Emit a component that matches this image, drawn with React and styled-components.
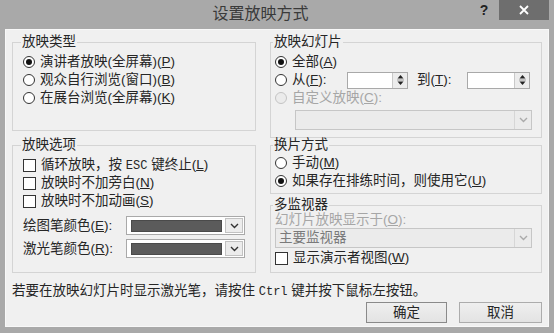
import React from "react";
import styled, { createGlobalStyle } from "styled-components";

const GlobalStyle = createGlobalStyle`
  html, body {
    margin: 0;
    padding: 0;
    background: #a9a9a9;
  }
  body {
    font-family: "Liberation Sans", "Noto Sans CJK SC", sans-serif;
    font-size: 13.5px;
    line-height: 18px;
    color: #262626;
  }
  * {
    box-sizing: border-box;
  }
`;

const Window = styled.div`
  width: 554px;
  height: 333px;
  background: #a9a9a9;
  display: flex;
  flex-direction: column;
`;

const TitleBar = styled.div`
  height: 29px;
  flex: none;
  display: flex;
  align-items: flex-start;
`;

const Title = styled.div`
  flex: 1;
  padding-left: 52px;
  text-align: center;
  font-size: 16px;
  line-height: 28px;
  color: #3a3a3a;
`;

const HelpButton = styled.div`
  width: 30px;
  height: 20px;
  text-align: center;
  font: bold 14px/20px "Liberation Sans", sans-serif;
  color: #222;
`;

const CloseButton = styled.div`
  width: 50px;
  height: 20px;
  margin-right: 5px;
  background: #6e6e6e;
  display: flex;
  align-items: center;
  justify-content: center;
`;

const Client = styled.div`
  flex: 1;
  margin: 0 5px 6px 5px;
  background: #f0f0f0;
  border: 1px solid #f8f8f8;
  padding: 5px 6px 0 6px;
  display: flex;
  flex-direction: column;
`;

const Columns = styled.div`
  display: grid;
  grid-template-columns: 244px 1fr;
  column-gap: 14px;
  height: 238px;
`;

const Column = styled.div`
  display: flex;
  flex-direction: column;
`;

const Group = styled.fieldset`
  margin: ${(p) => p.$mt || 0}px 0 0 0;
  padding: ${(p) => p.$pt ?? 4}px 8px 0 ${(p) => p.$pl || 10}px;
  border: 1px solid #d4d4d4;
  height: ${(p) => p.$h}px;
  min-width: 0;
  display: flex;
  flex-direction: column;
`;

const Legend = styled.legend`
  padding: 0 1px;
  margin-left: -2px;
  line-height: 14px;
`;

const Row = styled.div`
  display: flex;
  align-items: center;
  height: ${(p) => p.$h || 18}px;
  gap: ${(p) => p.$gap ?? 5}px;
  white-space: nowrap;
  color: ${(p) => (p.$disabled ? "#a6a6a6" : "inherit")};
  margin-top: ${(p) => p.$mt || 0}px;
`;

const Radio = styled.span`
  flex: none;
  width: 12px;
  height: 12px;
  border-radius: 50%;
  border: 1px solid ${(p) => (p.$disabled ? "#c4c4c4" : "#333")};
  background: ${(p) => (p.$disabled ? "#ebebeb" : "#fff")};
  display: flex;
  align-items: center;
  justify-content: center;

  &::after {
    content: "";
    display: ${(p) => (p.$checked ? "block" : "none")};
    width: 6px;
    height: 6px;
    border-radius: 50%;
    background: #111;
  }
`;

const Check = styled.span`
  flex: none;
  width: 13px;
  height: 13px;
  border: 1px solid #333;
  background: #fff;
`;

const Mono = styled.span`
  font-family: "Liberation Mono", monospace;
  font-size: 12px;
`;

const Label = styled.span`
  flex: none;
  width: ${(p) => p.$w}px;
  margin-left: ${(p) => p.$ml || 0}px;
`;

const Spin = styled.div`
  flex: none;
  width: ${(p) => p.$w}px;
  height: 17px;
  border: 1px solid #a9a9a9;
  background: #fff;
  display: flex;
  justify-content: flex-end;
`;

const SpinButtons = styled.div`
  width: 15px;
  border-left: 1px solid #c9c9c9;
  background: #ececec;
  display: flex;
  align-items: center;
  justify-content: center;
`;

const Select = styled.div`
  width: ${(p) => p.$w}px;
  height: 20px;
  margin-left: ${(p) => p.$ml || 0}px;
  margin-top: ${(p) => p.$mt || 0}px;
  border: 1px solid #c6c6c6;
  background: #ebebeb;
  display: flex;
  color: #7a7a7a;
  line-height: 18px;
`;

const SelectText = styled.div`
  flex: 1;
  padding-left: 3px;
`;

const SelectArrow = styled.div`
  width: 17px;
  border-left: 1px solid #d6d6d6;
  display: flex;
  align-items: center;
  justify-content: center;
`;

const ColorSelect = styled.div`
  flex: none;
  width: 119px;
  height: 19px;
  border: 1px solid #a9a9a9;
  background: #fff;
  display: flex;
  padding: 3px 1px 2px 4px;
  gap: 3px;
`;

const Swatch = styled.div`
  flex: 1;
  background: #5b5b5b;
  border: 1px solid #4a4a4a;
`;

const ColorArrow = styled.div`
  width: 18px;
  margin: -2px 0 -1px;
  border: 1px solid #c2c2c2;
  background: #ececec;
  display: flex;
  align-items: center;
  justify-content: center;
`;

const Footer = styled.div`
  margin-top: 10px;
  line-height: 16px;
  white-space: nowrap;
`;

const Buttons = styled.div`
  display: flex;
  justify-content: flex-end;
  gap: 12px;
  margin-top: 2px;
`;

const Button = styled.div`
  width: ${(p) => p.$w}px;
  height: 21px;
  border: 1px solid ${(p) => (p.$default ? "#8a8a8a" : "#acacac")};
  background: linear-gradient(#efefef, #e3e3e3);
  text-align: center;
  line-height: 19px;
`;

const Chevron = ({ color = "#333" }) => (
  <svg width="9" height="6" viewBox="0 0 9 6">
    <path d="M1 1l3.5 3.5L8 1" fill="none" stroke={color} strokeWidth="1.4" />
  </svg>
);

const SpinArrows = () => (
  <svg width="7" height="12" viewBox="0 0 7 12">
    <path d="M3.5 1L6.5 4.5H0.5z" fill="#222" />
    <path d="M0 6h7" stroke="#999" strokeWidth="1" />
    <path d="M0.5 7.5h6L3.5 11z" fill="#222" />
  </svg>
);

const CloseIcon = () => (
  <svg width="10" height="10" viewBox="0 0 10 10">
    <path d="M1 1l8 8M9 1l-8 8" stroke="#fff" strokeWidth="1.8" />
  </svg>
);

const ColorRow = ({ label, hotkey, mt }) => (
  <Row $h={19} $mt={mt} $gap={0}>
    <Label $w={103}>
      {label}(<u>{hotkey}</u>):
    </Label>
    <ColorSelect>
      <Swatch />
      <ColorArrow>
        <Chevron />
      </ColorArrow>
    </ColorSelect>
  </Row>
);

const App = () => (
  <>
    <GlobalStyle />
    <Window>
      <TitleBar>
        <Title>设置放映方式</Title>
        <HelpButton>?</HelpButton>
        <CloseButton>
          <CloseIcon />
        </CloseButton>
      </TitleBar>
      <Client>
        <Columns>
          <Column>
            <Group $h={96}>
              <Legend>放映类型</Legend>
              <Row>
                <Radio $checked />
                <span>
                  演讲者放映(全屏幕)(<u>P</u>)
                </span>
              </Row>
              <Row>
                <Radio />
                <span>
                  观众自行浏览(窗口)(<u>B</u>)
                </span>
              </Row>
              <Row>
                <Radio />
                <span>
                  在展台浏览(全屏幕)(<u>K</u>)
                </span>
              </Row>
            </Group>
            <Group $h={135} $mt={7}>
              <Legend>放映选项</Legend>
              <Row>
                <Check />
                <span>
                  循环放映，按 <Mono>ESC</Mono> 键终止(<u>L</u>)
                </span>
              </Row>
              <Row>
                <Check />
                <span>
                  放映时不加旁白(<u>N</u>)
                </span>
              </Row>
              <Row>
                <Check />
                <span>
                  放映时不加动画(<u>S</u>)
                </span>
              </Row>
              <ColorRow label="绘图笔颜色" hotkey="E" mt={6} />
              <ColorRow label="激光笔颜色" hotkey="R" mt={4} />
            </Group>
          </Column>
          <Column>
            <Group $h={103} $pl={4}>
              <Legend>放映幻灯片</Legend>
              <Row>
                <Radio $checked />
                <span>
                  全部(<u>A</u>)
                </span>
              </Row>
              <Row>
                <Radio />
                <Label $w={50}>
                  从(<u>F</u>):
                </Label>
                <Spin $w={61}>
                  <SpinButtons>
                    <SpinArrows />
                  </SpinButtons>
                </Spin>
                <Label $w={45} $ml={4}>
                  到(<u>T</u>):
                </Label>
                <Spin $w={63}>
                  <SpinButtons>
                    <SpinArrows />
                  </SpinButtons>
                </Spin>
              </Row>
              <Row $disabled>
                <Radio $disabled />
                <span>
                  自定义放映(<u>C</u>):
                </span>
              </Row>
              <Select $w={237} $ml={20} $mt={3}>
                <SelectText />
                <SelectArrow>
                  <Chevron color="#aaa" />
                </SelectArrow>
              </Select>
            </Group>
            <Group $h={56} $pl={4} $pt={2}>
              <Legend>换片方式</Legend>
              <Row>
                <Radio />
                <span>
                  手动(<u>M</u>)
                </span>
              </Row>
              <Row>
                <Radio $checked />
                <span>
                  如果存在排练时间，则使用它(<u>U</u>)
                </span>
              </Row>
            </Group>
            <Group $h={75} $pl={4} $pt={0} $mt={4}>
              <Legend>多监视器</Legend>
              <Row $disabled $h={16}>
                <span>
                  幻灯片放映显示于(<u>O</u>):
                </span>
              </Row>
              <Select $w={257}>
                <SelectText>主要监视器</SelectText>
                <SelectArrow>
                  <Chevron color="#aaa" />
                </SelectArrow>
              </Select>
              <Row $mt={1}>
                <Check />
                <span>
                  显示演示者视图(<u>W</u>)
                </span>
              </Row>
            </Group>
          </Column>
        </Columns>
        <Footer>
          若要在放映幻灯片时显示激光笔，请按住 <Mono>Ctrl</Mono> 键并按下鼠标左按钮。
        </Footer>
        <Buttons>
          <Button $w={81} $default>
            确定
          </Button>
          <Button $w={83}>取消</Button>
        </Buttons>
      </Client>
    </Window>
  </>
);

export default App;
